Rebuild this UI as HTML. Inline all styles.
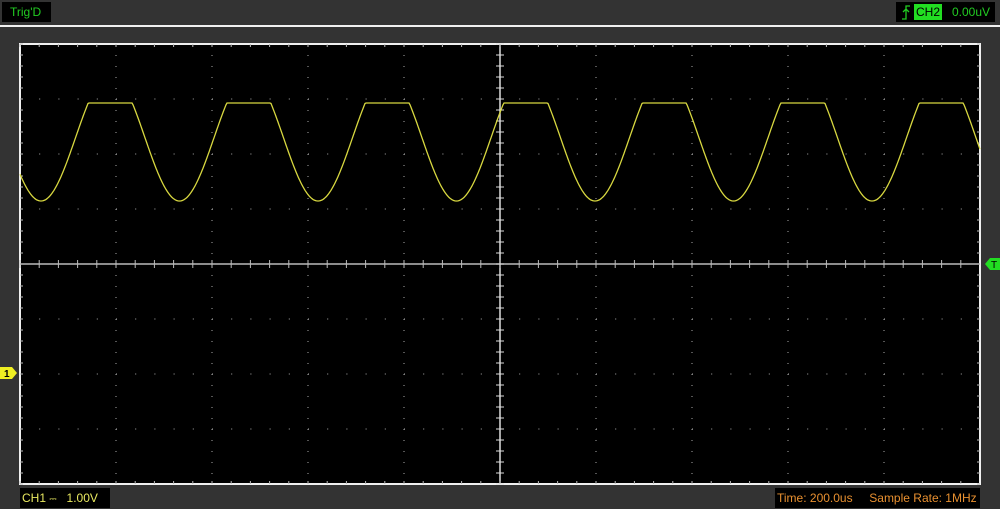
<!DOCTYPE html>
<html><head><meta charset="utf-8"><style>
body{margin:0;width:1000px;height:509px;background:#333333;overflow:hidden;position:relative;font-family:"Liberation Sans",sans-serif;font-size:12px}
.box{position:absolute;background:#000;line-height:20px;height:20px}
</style></head><body>
<div class="box" style="left:2px;top:2px;width:49px;color:#22cc22;padding-left:8px;box-sizing:border-box">Trig'D</div>
<div class="box" style="left:896px;top:2px;width:99px;color:#22cc22">
<svg style="position:absolute;left:5px;top:3px" width="10" height="15"><path d="M1 14H5V1H9M2 7L5 4L8 7" stroke="#22cc22" fill="none" stroke-width="1.3"/></svg>
<span style="position:absolute;left:18px;top:2px;height:16px;line-height:16px;background:#22dd22;color:#000;padding:0 2px">CH2</span>
<span style="position:absolute;left:56px">0.00uV</span></div>
<div style="position:absolute;left:0;top:25px;width:1000px;height:2px;background:#f0f0f0"></div>
<svg id="s" style="position:absolute;left:0;top:0" width="1000" height="509"></svg>
<div class="box" style="left:20px;top:488px;width:90px;color:#e8e860;padding-left:2px;box-sizing:border-box">CH1 <span style="font-size:9px">⎓</span> &nbsp; 1.00V</div>
<div class="box" style="left:775px;top:488px;width:205px;color:#e89030;padding-left:2px;box-sizing:border-box">Time: 200.0us &nbsp;&nbsp;&nbsp; Sample Rate: 1MHz</div>
<script>
var s='';
s+='<rect x="20" y="44" width="960" height="440" fill="#000" stroke="#f0f0f0" stroke-width="2"/>';
// dots
for(var i=1;i<10;i++){var x=20+96*i;if(i==5)continue;for(var y=44;y<484;y+=11)s+='<rect x="'+(x-0.5)+'" y="'+y+'" width="1" height="1" fill="#aaa"/>';}
for(var j=1;j<8;j++){var y=44+55*j;if(j==4)continue;for(var x=20;x<980;x+=19.2)s+='<rect x="'+x+'" y="'+(y-0.5)+'" width="1" height="1" fill="#aaa"/>';}
s+='<line x1="20" y1="264" x2="980" y2="264" stroke="#bbb" stroke-width="1.5"/>';
s+='<line x1="500" y1="44" x2="500" y2="484" stroke="#ddd" stroke-width="1.5"/>';
for(var x=20;x<=980;x+=19.2){s+='<line x1="'+x+'" y1="260" x2="'+x+'" y2="268" stroke="#bbb"/>';s+='<line x1="'+x+'" y1="44" x2="'+x+'" y2="47" stroke="#bbb"/><line x1="'+x+'" y1="481" x2="'+x+'" y2="484" stroke="#bbb"/>';}
for(var y=44;y<=484;y+=11){s+='<line x1="496" y1="'+y+'" x2="504" y2="'+y+'" stroke="#ddd"/>';s+='<line x1="20" y1="'+y+'" x2="23" y2="'+y+'" stroke="#bbb"/><line x1="977" y1="'+y+'" x2="980" y2="'+y+'" stroke="#bbb"/>';}
var d='';for(var x=20;x<=980;x++){var y=137.4+63.6*Math.cos(2*Math.PI*(x-41)/138.5);if(y<103)y=103;d+=(x==20?'M':'L')+x+' '+y.toFixed(1);}
s+='<path d="'+d+'" stroke="#d8d840" fill="none" stroke-width="1.3"/>';
s+='<path d="M985 264L990 258H1000V270H990Z" fill="#22dd22"/><text x="991" y="268" font-size="10" font-family="Liberation Sans" fill="#000">T</text>';
s+='<path d="M0 367H12L17 373L12 379H0Z" fill="#eeee22"/><text x="4" y="377" font-size="10" font-weight="bold" font-family="Liberation Sans" fill="#000">1</text>';
document.getElementById('s').innerHTML=s;
</script>
</body></html>
